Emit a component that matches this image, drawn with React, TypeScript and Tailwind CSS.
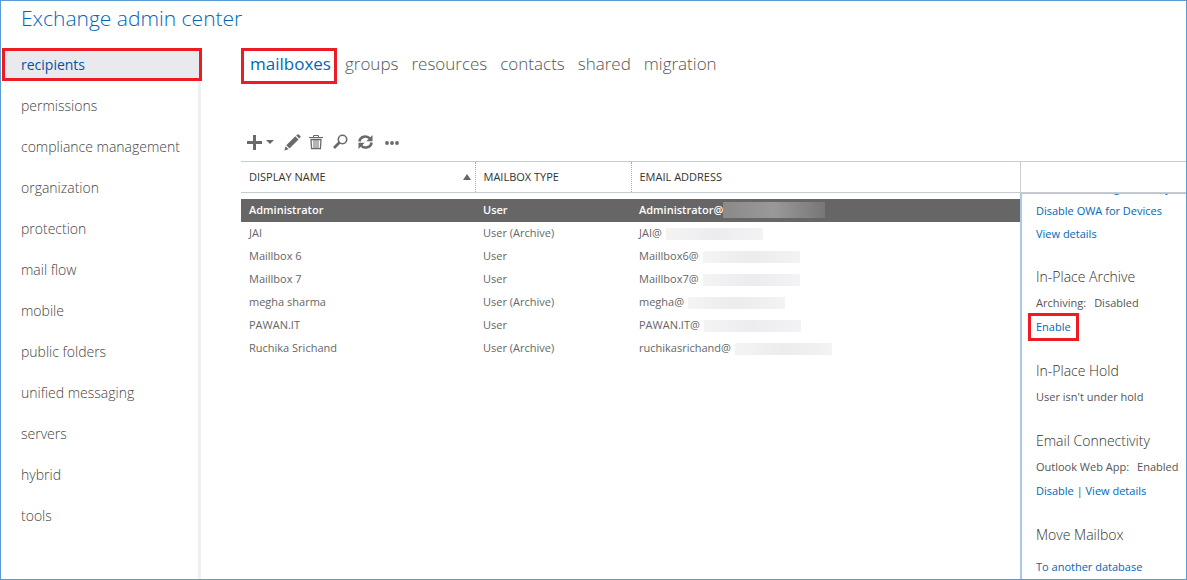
import { useState } from 'react';
import type { ReactNode } from 'react';

const NAV_ITEMS = [
	'recipients',
	'permissions',
	'compliance management',
	'organization',
	'protection',
	'mail flow',
	'mobile',
	'public folders',
	'unified messaging',
	'servers',
	'hybrid',
	'tools',
];

const TABS = ['mailboxes', 'groups', 'resources', 'contacts', 'shared', 'migration'];

type Mailbox = {
	name: string;
	type: string;
	email: string;
	maskWidth: number;
};

const MAILBOXES: Mailbox[] = [
	{ name: 'Administrator', type: 'User', email: 'Administrator@', maskWidth: 102 },
	{ name: 'JAI', type: 'User (Archive)', email: 'JAI@', maskWidth: 97 },
	{ name: 'Maillbox 6', type: 'User', email: 'Maillbox6@', maskWidth: 97 },
	{ name: 'Maillbox 7', type: 'User', email: 'Maillbox7@', maskWidth: 97 },
	{ name: 'megha sharma', type: 'User (Archive)', email: 'megha@', maskWidth: 97 },
	{ name: 'PAWAN.IT', type: 'User', email: 'PAWAN.IT@', maskWidth: 97 },
	{ name: 'Ruchika Srichand', type: 'User (Archive)', email: 'ruchikasrichand@', maskWidth: 97 },
];

function Toolbar() {
	return (
		<div className="mt-[49px] flex h-[18px] items-center pl-1.5 text-[#6a6a6e]">
			<button aria-label="New" className="flex items-center gap-1">
				<svg width="15" height="16" viewBox="0 0 15 16" fill="currentColor">
					<path d="M6 1h3v6h6v3H9v6H6v-6H0V7h6z" />
				</svg>
				<svg width="8" height="4" viewBox="0 0 8 4" fill="currentColor">
					<path d="M0 0h8L4 4z" />
				</svg>
			</button>
			<button aria-label="Edit" className="ml-2.5">
				<svg width="17" height="17" viewBox="0 0 17 17" fill="currentColor">
					<path d="M12.2 1.600 13.300.5q.7-.7 1.400 0l1.600 1.600q.7.7 0 1.400l-1.100 1.100zM11.300 2.300l3.200 3.200-9 9-3.200-3.200zM1.600 12.200l3 3L.3 16.600z" />
				</svg>
			</button>
			<button aria-label="Delete" className="ml-2">
				<svg width="14" height="16" viewBox="0 0 14 16" fill="none" stroke="currentColor">
					<path d="M0 3.500h14M4.500 3V1.500h5V3" />
					<path d="M2 5.500h10l-.6 9.200H2.600z" strokeWidth="1.300" />
					<path d="M5 6v8.500M7 6v8.500M9 6v8.500" />
				</svg>
			</button>
			<button aria-label="Search" className="ml-2.5">
				<svg width="15" height="16" viewBox="0 0 15 16" fill="none" stroke="currentColor">
					<circle cx="9.500" cy="5.500" r="4.200" strokeWidth="1.600" />
					<path d="M6.400 8.600 1 14" strokeWidth="2.800" />
				</svg>
			</button>
			<button aria-label="Refresh" className="ml-2.5">
				<svg width="15" height="16" viewBox="0 0 15 16" fill="none" stroke="currentColor" strokeWidth="2.500">
					<path d="M1.400 7.500a6 5.600 0 0 1 10.600-3M13.600 8.500a6 5.600 0 0 1-10.600 3" />
					<path d="M14.500 1v6.200H8.300zM.5 15V8.800h6.200z" fill="currentColor" stroke="none" />
				</svg>
			</button>
			<button aria-label="More" className="ml-3">
				<svg width="14" height="16" viewBox="0 0 14 16" fill="currentColor">
					<circle cx="2" cy="9" r="1.900" />
					<circle cx="7" cy="9" r="1.900" />
					<circle cx="12" cy="9" r="1.900" />
				</svg>
			</button>
		</div>
	);
}

function MailboxTable() {
	const [selected, setSelected] = useState(0);

	return (
		<table className="w-full table-fixed border-collapse text-left text-[11px] text-[#666]">
			<colgroup>
				<col className="w-[234px]" />
				<col className="w-[156px]" />
				<col />
			</colgroup>
			<thead>
				<tr className="h-[31px] border-y border-[#c5ccd2] text-[#333]">
					<th className="border-r border-dotted border-r-[#aaa] px-2 font-normal">
						<span className="flex items-center justify-between">
							DISPLAY NAME
							<svg width="8" height="6" viewBox="0 0 8 6" fill="#666" className="-mr-1">
								<path d="M4 0l4 6H0z" />
							</svg>
						</span>
					</th>
					<th className="border-r border-dotted border-r-[#aaa] px-2 font-normal">MAILBOX TYPE</th>
					<th className="px-2 font-normal">EMAIL ADDRESS</th>
				</tr>
			</thead>
			<tbody className="before:block before:h-1.5">
				{MAILBOXES.map((box, i) => (
					<tr
						key={box.name}
						onClick={() => setSelected(i)}
						className={
							i === selected
								? 'h-[23px] border-b border-white bg-[#666] font-semibold text-white'
								: 'h-[23px] border-b border-white'
						}
					>
						<td className="px-2">{box.name}</td>
						<td className="px-2">{box.type}</td>
						<td className="px-2">
							<span className="flex items-center">
								{box.email}
								<span
									className={
										i === selected
											? 'h-4 bg-linear-to-r from-[#8a8a8a] via-[#999] to-[#777]'
											: 'ml-1 h-3 bg-linear-to-r from-[#f4f4f5] via-[#ececee] to-[#f3f3f5]'
									}
									style={{ width: box.maskWidth }}
								/>
							</span>
						</td>
					</tr>
				))}
			</tbody>
		</table>
	);
}

function Link({ children }: { children: ReactNode }) {
	return (
		<a href="#" className="text-[#0067b8]">
			{children}
		</a>
	);
}

function Heading({ children }: { children: ReactNode }) {
	return <h2 className="mt-5 mb-0.5 text-sm leading-6 font-light text-[#333]">{children}</h2>;
}

function Details() {
	return (
		<aside className="flex w-[166px] shrink-0 flex-col">
			<div className="h-8 shrink-0 border-y border-l border-[#c5ccd2] border-l-[#ccc]" />
			<div className="min-h-0 flex-1 overflow-hidden border-t border-l-2 border-[#a9c6ee] pl-3.5 text-[11px] leading-6 whitespace-nowrap text-[#555]">
				<p className="-mt-[18px] leading-[23px]">
					<Link>Disable Exchange ActiveSync</Link>
				</p>
				<p className="leading-[23px]">
					<Link>Disable OWA for Devices</Link>
				</p>
				<p className="leading-[23px]">
					<Link>View details</Link>
				</p>

				<Heading>In-Place Archive</Heading>
				<p className="flex gap-2">
					<span>Archiving:</span>
					<span>Disabled</span>
				</p>
				<p className="-my-0.5 flex">
					<a href="#" className="-ml-2 border-3 border-[#ed1c24] px-[5px] leading-[22px] text-[#0067b8]">
						Enable
					</a>
				</p>

				<Heading>In-Place Hold</Heading>
				<p>User isn't under hold</p>

				<Heading>Email Connectivity</Heading>
				<p className="flex gap-2">
					<span>Outlook Web App:</span>
					<span>Enabled</span>
				</p>
				<p>
					<Link>Disable</Link> | <Link>View details</Link>
				</p>

				<Heading>Move Mailbox</Heading>
				<p className="pt-1.5">
					<Link>To another database</Link>
				</p>
			</div>
		</aside>
	);
}

export default function App() {
	const [section, setSection] = useState('recipients');
	const [tab, setTab] = useState('mailboxes');

	return (
		<div className="flex h-screen flex-col overflow-hidden border border-[#5b9bd5] bg-white font-['Open_Sans','Noto_Sans',sans-serif]">
			<header className="h-[47px] shrink-0 pl-5">
				<h1 className="text-[21px] leading-[34px] font-light text-[#0067b8]">Exchange admin center</h1>
			</header>

			<div className="flex min-h-0 flex-1">
				<nav className="flex w-[200px] shrink-0 flex-col gap-2 border-r-3 border-[#f0f0f0] pl-px">
					{NAV_ITEMS.map((item) => (
						<button
							key={item}
							onClick={() => setSection(item)}
							className={
								item === section
									? '-mr-1 h-[33px] border-3 border-[#ed1c24] bg-[#e9eaed] pl-4 text-left text-sm text-[#0054a6]'
									: 'h-[33px] pl-[19px] text-left text-sm font-light text-[#444]'
							}
						>
							{item}
						</button>
					))}
				</nav>

				<main className="flex min-w-0 flex-1 flex-col pl-10">
					<div className="flex h-9 gap-[13px]">
						{TABS.map((t) => (
							<button
								key={t}
								onClick={() => setTab(t)}
								className={
									t === tab
										? '-mr-[5px] border-3 border-[#ed1c24] pr-[3px] pb-1 pl-1.5 text-[17px] text-[#0067b8]'
										: 'pb-1 text-[17px] font-light text-[#555]'
								}
							>
								{t}
							</button>
						))}
					</div>

					<Toolbar />

					<div className="mt-2.5 flex min-h-0 flex-1">
						<div className="min-w-0 flex-1">
							<MailboxTable />
						</div>
						<Details />
					</div>
				</main>
			</div>
		</div>
	);
}
